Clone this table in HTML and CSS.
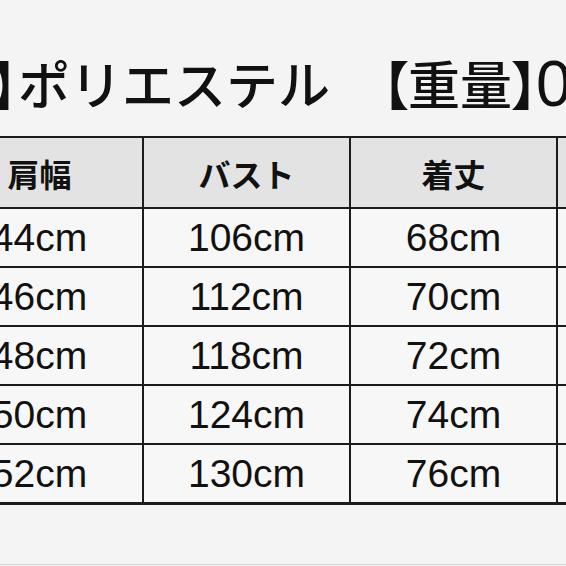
FILE: index.html
```html
<!DOCTYPE html>
<html lang="ja">
<head>
<meta charset="utf-8">
<title>サイズ表</title>
<link rel="stylesheet" href="styles.css">
</head>
<body>
<div class="page">
  <div class="title"><span class="br br-lead">】</span>ポリエステル<span class="gap"></span><span class="br">【</span>重量<span class="br br-end">】</span><span class="num">0</span></div>
  <table class="sizes">
    <thead>
      <tr><th>肩幅</th><th>バスト</th><th>着丈</th><th></th></tr>
    </thead>
    <tbody>
      <tr><td>44cm</td><td>106cm</td><td>68cm</td><td></td></tr>
      <tr><td>46cm</td><td>112cm</td><td>70cm</td><td></td></tr>
      <tr><td>48cm</td><td>118cm</td><td>72cm</td><td></td></tr>
      <tr><td>50cm</td><td>124cm</td><td>74cm</td><td></td></tr>
      <tr class="last"><td>52cm</td><td>130cm</td><td>76cm</td><td></td></tr>
    </tbody>
  </table>
</div>
</body>
</html>
```

FILE: styles.css
```css
html, body {
  margin: 0;
  padding: 0;
  background: #f4f4f4;
  overflow: hidden;
}

.page {
  width: 566px;
  height: 564px;
  border-bottom: 1px solid #d6d6d6;
  overflow: hidden;
  background: #f4f4f4;
}

.title {
  padding-top: 57px;
  height: 52px;
  line-height: 52px;
  font-family: "Noto Sans CJK JP", sans-serif;
  font-size: 52px;
  font-weight: 500;
  color: #111;
  white-space: nowrap;
  margin-left: -8px;
}

.br {
  font-feature-settings: "palt";
  font-weight: 700;
}

.num {
  font-family: "Liberation Sans", Arial, sans-serif;
  font-size: 64px;
  font-weight: 400;
  vertical-align: top;
  line-height: 54px;
  margin-left: -2px;
}

.gap {
  display: inline-block;
  width: 52px;
}

.sizes {
  margin-top: 27px;
  margin-left: -63px;
  border-collapse: separate;
  border-spacing: 0;
  border-top: 2px solid #1c1c1c;
  table-layout: fixed;
  width: 828px;
}

.sizes th,
.sizes td {
  box-sizing: border-box;
  width: 207px;
  padding: 0;
  text-align: center;
  vertical-align: middle;
  border-right: 2px solid #1c1c1c;
  border-bottom: 2px solid #1c1c1c;
  color: #111;
}

.sizes th {
  height: 71px;
  background: #e3e3e3;
  font-family: "Noto Sans CJK JP", sans-serif;
  font-size: 32px;
  font-weight: 700;
}

.sizes td {
  height: 59px;
  background: #f7f7f7;
  font-family: "Liberation Sans", Arial, sans-serif;
  font-size: 39px;
  font-weight: 400;
}

.sizes tr.last td {
  height: 60px;
  border-bottom-width: 3px;
}
```
